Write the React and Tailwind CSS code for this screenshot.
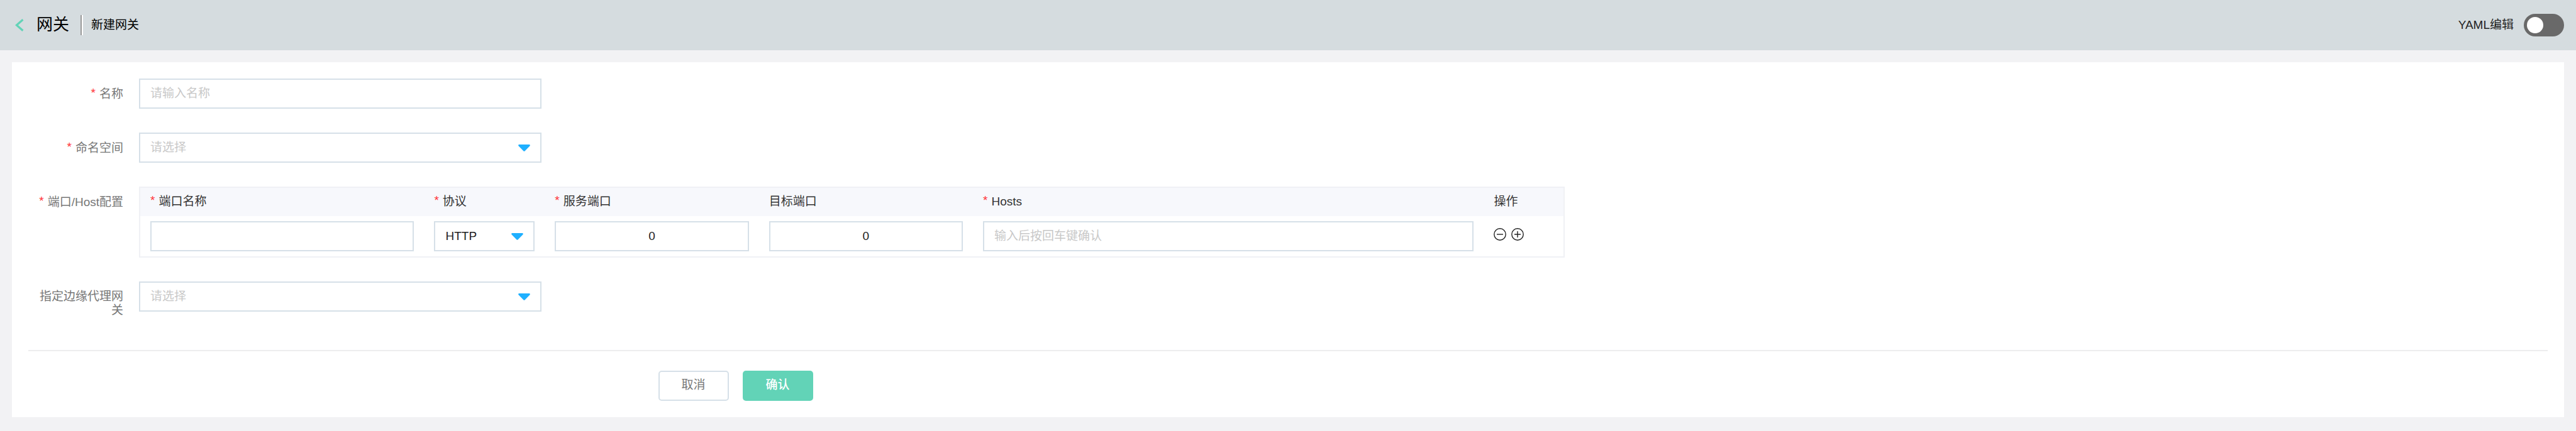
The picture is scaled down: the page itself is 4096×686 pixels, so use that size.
import { useState } from 'react';

const field =
  'h-12 w-full rounded-none border-2 border-[#d6e0e8] bg-white px-4 text-[19px] text-[#222] outline-none placeholder:text-[#c8c8c8]';

function Star() {
  return <span className="mr-1.5 align-[2px] leading-none text-[#ff3338]">*</span>;
}

function Row({ label, htmlFor, required, children }) {
  return (
    <div className="flex items-start">
      <label
        htmlFor={htmlFor}
        className="mr-[25px] w-[151px] shrink-0 pt-[13px] text-right leading-[22px] text-[#777]"
      >
        {required && <Star />}
        {label}
      </label>
      {children}
    </div>
  );
}

function Select({ id, label, placeholder, options = [] }) {
  return (
    <div className="grid w-full items-center">
      <select
        id={id}
        aria-label={label}
        className={`${field} col-start-1 row-start-1 appearance-none pr-12 ${placeholder ? 'text-[#c8c8c8]' : ''}`}
      >
        {placeholder && <option>{placeholder}</option>}
        {options.map((o) => (
          <option key={o}>{o}</option>
        ))}
      </select>
      <svg
        viewBox="0 0 19 11"
        className="pointer-events-none col-start-1 row-start-1 mr-[18px] h-[11px] w-[19px] justify-self-end"
        fill="#1fb0ff"
        aria-hidden="true"
      >
        <path d="M1.6 0H17.4C18.9 0 19.3 1.5 18.3 2.5L10.7 10.2C10 10.9 9 10.9 8.3 10.2L.7 2.5C-.3 1.5 .1 0 1.6 0Z" />
      </svg>
    </div>
  );
}

function RoundIcon({ plus }) {
  return (
    <svg viewBox="0 0 20 20" className="size-5" fill="none" stroke="#222" strokeWidth="1.4" aria-hidden="true">
      <circle cx="10" cy="10" r="9.2" />
      <path d={plus ? 'M5 10H15M10 5V15' : 'M5 10H15'} />
    </svg>
  );
}

const columns = [
  { title: '端口名称', required: true, width: 'w-[19.95%]' },
  { title: '协议', required: true, width: 'w-[8.48%]' },
  { title: '服务端口', required: true, width: 'w-[15.04%]' },
  { title: '目标端口', width: 'w-[15.04%]' },
  { title: 'Hosts', required: true, width: 'w-[35.9%]' },
  { title: '操作', width: 'w-[5.59%]' },
];

export default function App() {
  const [yaml, setYaml] = useState(false);
  return (
    <div className="min-h-screen bg-[#f2f2f4] font-['Liberation_Sans','Noto_Sans_CJK_SC',sans-serif] text-[19px] text-[#222]">
      <header className="flex h-20 items-center bg-[#d5dcdf] pr-[19px] pl-6">
        <button type="button" aria-label="返回" className="mr-5 flex">
          <svg viewBox="0 0 14 20" className="h-5 w-3.5" fill="none" stroke="#62d3b7" strokeWidth="3.2" aria-hidden="true">
            <path d="M12.4 1.2L2.4 10L12.4 18.8" />
          </svg>
        </button>
        <h1 className="pb-0.5 text-[26px] leading-8 text-black">网关</h1>
        <span className="mr-[13px] ml-[18px] h-8 w-1 border-r-2 border-l-2 border-r-white border-l-[#999]" />
        <span className="text-black">新建网关</span>
        <label className="ml-auto flex cursor-pointer items-center gap-4">
          <span>YAML编辑</span>
          <input
            type="checkbox"
            role="switch"
            checked={yaml}
            onChange={(e) => setYaml(e.target.checked)}
            className="flex h-9 w-16 appearance-none items-center rounded-full bg-[#696969] px-[5px] before:size-[26px] before:rounded-full before:bg-white checked:justify-end checked:bg-[#62d3b7]"
          />
        </label>
      </header>

      <main className="p-[19px]">
        <form className="bg-white p-[26px]" onSubmit={(e) => e.preventDefault()}>
          <div className="flex flex-col gap-[38px]">
            <Row label="名称" htmlFor="name" required>
              <div className="w-full max-w-[640px]">
                <input id="name" type="text" placeholder="请输入名称" className={`${field} block`} />
              </div>
            </Row>
            <Row label="命名空间" htmlFor="namespace" required>
              <div className="w-full max-w-[640px]">
                <Select id="namespace" placeholder="请选择" />
              </div>
            </Row>
            <Row label="端口/Host配置" htmlFor="port-name" required>
              <div className="w-full max-w-[2267px] border-2 border-[#f0f1f5]">
                <table className="w-full table-fixed">
                  <thead>
                    <tr className="h-[45px] bg-[#f7f8fc] text-left text-[#333]">
                      {columns.map((c) => (
                        <th key={c.title} className={`${c.width} px-4 font-normal`}>
                          {c.required && <Star />}
                          {c.title}
                        </th>
                      ))}
                    </tr>
                  </thead>
                  <tbody>
                    <tr>
                      <td className="px-4 py-2">
                        <input id="port-name" type="text" aria-label="端口名称" className={`${field} block`} />
                      </td>
                      <td className="px-4 py-2">
                        <Select label="协议" options={['HTTP', 'HTTPS', 'TCP']} />
                      </td>
                      <td className="px-4 py-2">
                        <input type="text" inputMode="numeric" aria-label="服务端口" defaultValue="0" className={`${field} block text-center`} />
                      </td>
                      <td className="px-4 py-2">
                        <input type="text" inputMode="numeric" aria-label="目标端口" defaultValue="0" className={`${field} block text-center`} />
                      </td>
                      <td className="px-4 py-2">
                        <input type="text" aria-label="Hosts" placeholder="输入后按回车键确认" className={`${field} block`} />
                      </td>
                      <td className="px-4 py-2">
                        <div className="flex gap-2 pb-1.5">
                          <button type="button" aria-label="删除">
                            <RoundIcon />
                          </button>
                          <button type="button" aria-label="添加">
                            <RoundIcon plus />
                          </button>
                        </div>
                      </td>
                    </tr>
                  </tbody>
                </table>
              </div>
            </Row>
            <Row label="指定边缘代理网关" htmlFor="edge-gateway">
              <div className="w-full max-w-[640px]">
                <Select id="edge-gateway" placeholder="请选择" />
              </div>
            </Row>
          </div>

          <div className="mt-[52px] flex gap-[22px] border-t-2 border-[#ededee] pt-[31px] pl-[25%]">
            <button type="button" className="h-12 w-28 rounded-[5px] border-2 border-[#d6e0e8] bg-white pb-0.5 text-[#777]">
              取消
            </button>
            <button type="submit" className="h-12 w-28 rounded-[5px] bg-[#62d3b7] pb-0.5 font-medium text-white">
              确认
            </button>
          </div>
        </form>
      </main>
    </div>
  );
}
